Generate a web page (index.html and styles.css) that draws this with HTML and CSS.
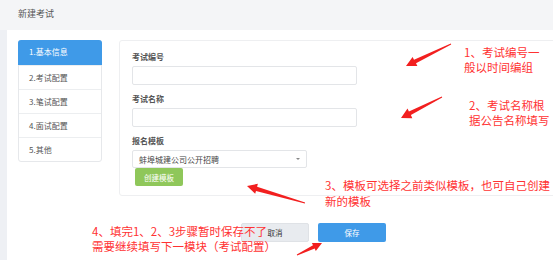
FILE: index.html
```html
<!doctype html>
<html lang="zh-CN">
    <head>
        <meta charset="UTF-8" />
        <meta name="viewport" content="width=device-width, initial-scale=1.0" />
        <title>新建考试</title>
        <link rel="stylesheet" href="styles.css">
    </head>
    <body>
        <div class="page-header">新建考试</div>
        <div class="page-body">
            <div class="side-strip"></div>
            <div class="content">
                <div class="editor">
                    <ul class="steps">
                        <li class="active">1.基本信息</li>
                        <li>2.考试配置</li>
                        <li>3.笔试配置</li>
                        <li>4.面试配置</li>
                        <li>5.其他</li>
                    </ul>
                    <div class="form-panel">
                        <div class="form-group">
                            <label for="exam-no">考试编号</label>
                            <input type="text" id="exam-no" class="field" />
                        </div>
                        <div class="form-group">
                            <label for="exam-name">考试名称</label>
                            <input type="text" id="exam-name" class="field" />
                        </div>
                        <div class="form-group last">
                            <label for="template">报名模板</label>
                            <div class="select" id="template">
                                <span>蚌埠城建公司公开招聘</span>
                                <span class="caret"></span>
                            </div>
                            <button class="btn btn-green">创建模板</button>
                        </div>
                    </div>
                </div>
                <div class="actions">
                    <button class="btn btn-cancel">取消</button>
                    <button class="btn btn-blue">保存</button>
                </div>
            </div>
        </div>

        <!-- annotations drawn over the screenshot -->
        <div class="note note-1">1、考试编号一<br />般以时间编组</div>
        <div class="note note-2">2、考试名称根<br />据公告名称填写</div>
        <div class="note note-3">3、模板可选择之前类似模板，也可自己创建<br />新的模板</div>
        <div class="note note-4">4、填完1、2、3步骤暂时保存不了<br />需要继续填写下一模块（考试配置）</div>
        <svg class="arrows" width="553" height="260" viewBox="0 0 553 260">
            <polygon points="406,66 417.4,66.1 416,63.3 451.2,44.4 450.8,43.6 414,59.8 412.6,56.9" />
            <polygon points="401,118 412.3,118.2 410.9,115.1 442.2,97.4 441.8,96.6 408.9,111.6 407.5,108.4" />
            <polygon points="247,186 255.2,193.8 256,190.9 304.9,203.5 305.1,202.5 257.1,186.8 257.9,183.8" />
            <polygon points="322,243 315.8,250.9 314.7,248.6 297.2,255.5 296.8,254.5 313,245.2 311.9,242.9" />
        </svg>
    </body>
</html>
```

FILE: styles.css
```css
body {
    margin: 0;
    width: 553px;
    height: 260px;
    overflow: hidden;
    position: relative;
    font-family: "Noto Sans CJK SC", "Noto Sans", sans-serif;
    background: #ffffff;
}
.page-header {
    height: 30px;
    line-height: 28px;
    padding-left: 18px;
    background: #f4f5f7;
    color: #555;
    font-size: 9px;
}
.page-body {
    display: flex;
    height: 230px;
}
.side-strip {
    width: 7px;
    flex: none;
    background: #eef0f4;
}
.content {
    flex: 1;
    min-width: 0;
    padding: 10px 0 0 11px;
    overflow: hidden;
}
.editor {
    display: flex;
    align-items: flex-start;
    gap: 17px;
}
.steps {
    flex: none;
    list-style: none;
    margin: 0;
    padding: 0;
    width: 84px;
    border: 1px solid #e6e8eb;
    border-radius: 3px;
    box-sizing: border-box;
}
.steps li {
    height: 24px;
    line-height: 24px;
    padding-left: 10px;
    font-size: 8px;
    color: #555;
    white-space: nowrap;
    border-top: 1px solid #eceef0;
    box-sizing: border-box;
}
.steps li:first-child {
    border-top: none;
}
.steps li.active {
    background: #3f9ae8;
    color: #fff;
    margin: -1px -1px 0;
    padding-left: 11px;
    height: 25px;
    border-radius: 3px 3px 0 0;
}
.form-panel {
    flex: none;
    width: 460px;
    border: 1px solid #eeeff1;
    border-radius: 3px;
    padding: 11px 12px 9px;
}
.form-group {
    margin-bottom: 9px;
}
.form-group.last {
    margin-bottom: 0;
}
.form-group label {
    display: block;
    height: 10px;
    line-height: 10px;
    margin-bottom: 4px;
    font-size: 8px;
    font-weight: bold;
    color: #555;
}
.field {
    display: block;
    width: 225px;
    height: 19px;
    padding: 0;
    border: 1px solid #e3e5e8;
    border-radius: 2px;
    box-sizing: border-box;
}
.select {
    display: flex;
    align-items: center;
    justify-content: space-between;
    width: 175px;
    height: 18px;
    padding: 0 6px;
    border: 1px solid #e3e5e8;
    border-radius: 2px;
    box-sizing: border-box;
    font-size: 8px;
    color: #444;
}
.caret {
    width: 0;
    height: 0;
    border-left: 2px solid transparent;
    border-right: 2px solid transparent;
    border-top: 2px solid #888;
}
.btn {
    border: none;
    border-radius: 2px;
    font-family: inherit;
    font-size: 7.5px;
    padding: 0;
    cursor: pointer;
}
.btn-green {
    display: block;
    margin-left: 3px;
    width: 48px;
    height: 18px;
    background: #8fc75a;
    color: #fff;
}
.actions {
    display: flex;
    gap: 9px;
    margin-top: 27px;
    padding-left: 223px;
}
.btn-cancel,
.btn-blue {
    width: 68px;
    height: 19px;
}
.btn-cancel {
    background: #e8ebef;
    color: #333;
    border: 1px solid #dfe2e6;
}
.btn-blue {
    background: #3f9ae8;
    color: #fff;
}
.note {
    position: absolute;
    color: #ff3232;
    font-size: 11.5px;
    line-height: 15px;
    white-space: nowrap;
}
.note-1 {
    left: 464px;
    top: 45px;
}
.note-2 {
    left: 469px;
    top: 98px;
}
.note-3 {
    left: 325px;
    top: 177px;
    line-height: 16px;
}
.note-4 {
    left: 92px;
    top: 224px;
}
.arrows {
    position: absolute;
    left: 0;
    top: 0;
    pointer-events: none;
}
.arrows polygon {
    fill: #f21f1f;
}
```
